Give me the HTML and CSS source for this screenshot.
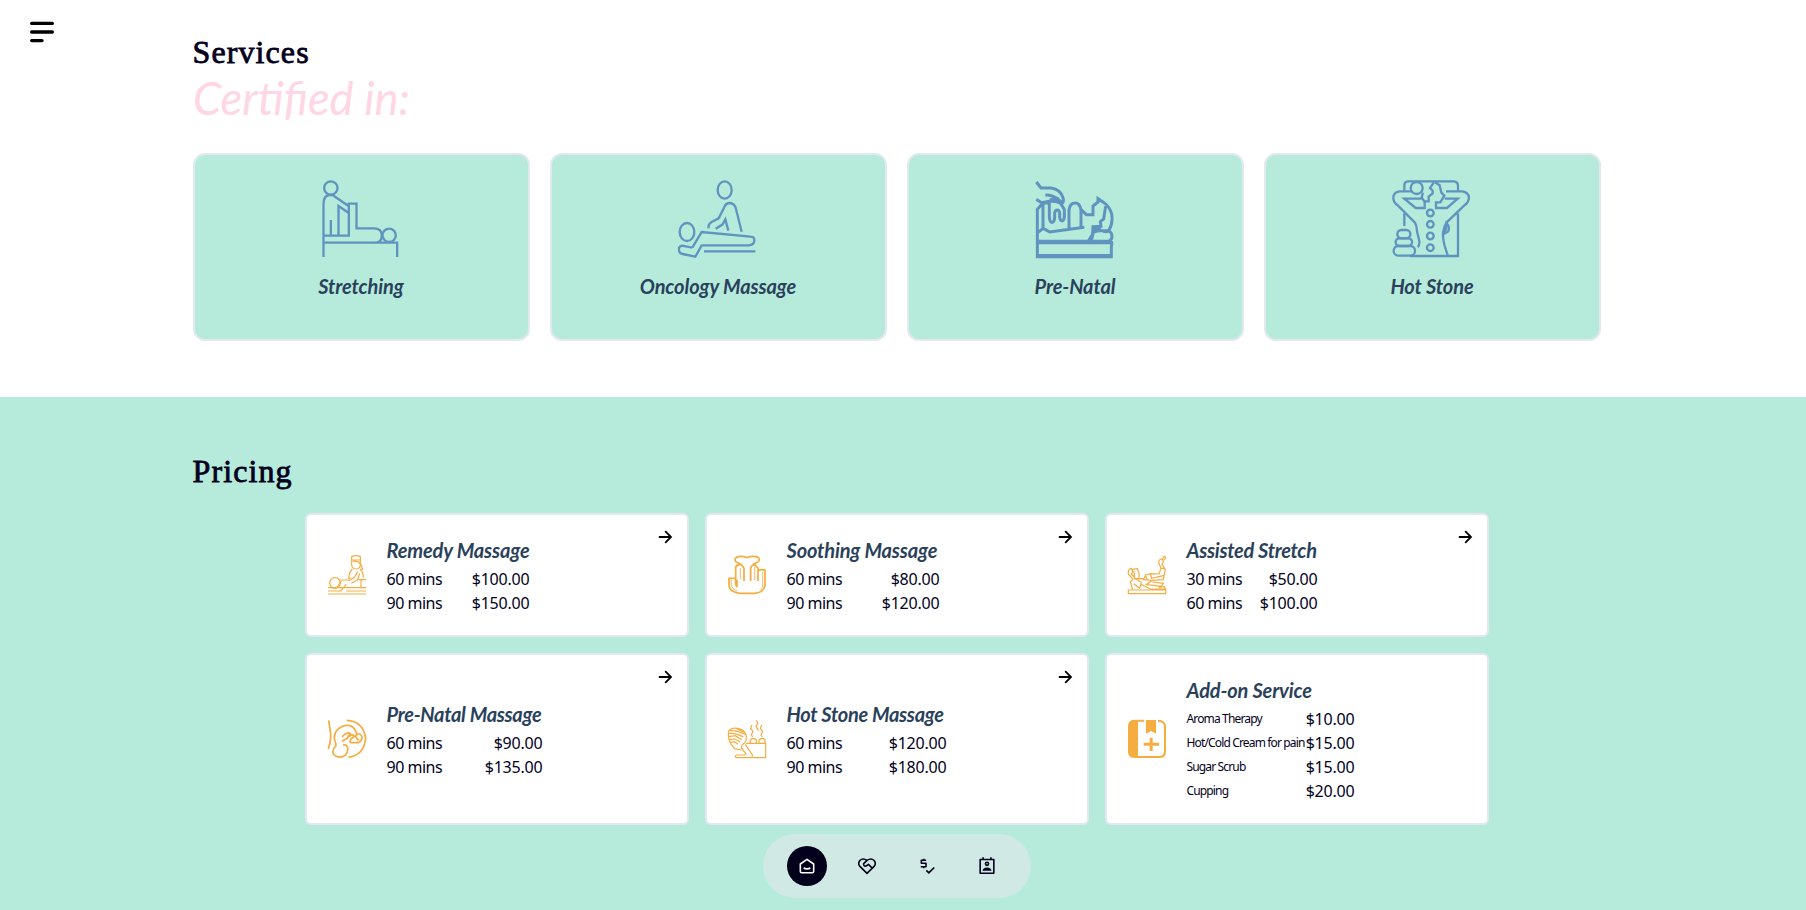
FILE: index.html
```html
<!DOCTYPE html>
<html lang="en">
<head>
<meta charset="utf-8">
<title>Massage Services</title>
<link rel="stylesheet" href="styles.css">
</head>
<body>
<button class="menu" aria-label="Menu">
  <svg viewBox="0 0 24 22"><path d="M1.7 2.4H22.3M1.7 11H22.3M1.7 19.6H12"/></svg>
</button>

<section class="services">
  <h2 class="heading">Services</h2>
  <p class="subheading"><span>Certified in:</span></p>
  <div class="service-grid">
    <article class="service">
      <svg class="service-icon" viewBox="35.5 30 240 240">
        <ellipse cx="65" cy="54" rx="20" ry="20"/>
        <path d="M43 261V103Q43 78 59 75H70L119 109M43 197H119V101H142V175H196Q218 176 218 197T196 218M43 218H264V261M65 150V197M88 197V108L119 129"/>
        <circle cx="240" cy="196" r="20"/>
      </svg>
      <h3 class="service-name">Stretching</h3>
    </article>
    <article class="service">
      <svg class="service-icon" viewBox="27 30 240 240">
        <ellipse cx="167" cy="60" rx="21" ry="26"/>
        <ellipse cx="54" cy="186" rx="22" ry="27"/>
        <path d="M119 175Q116 162 129 155L149 145L165 113Q170 99 183 99Q197 100 201 117L218 185M140 176L161 163L169 148L178 182M70 233L39 227Q28 229 30 240Q30 250 41 252L79 260L98 226H239Q256 224 256 212Q257 200 244 200L98 186L70 233M105 244H259"/>
      </svg>
      <h3 class="service-name">Oncology Massage</h3>
    </article>
    <article class="service">
      <svg class="service-icon heavy" viewBox="33 30 240 240">
        <path d="M37 36L51 54H82Q109 58 117 83Q121 97 113 102M64 75Q82 74 103 87M37 88L52 98L76 94M40 260V118L57 99H76V140Q77 157 84 157T92 142V130Q93 120 100 120T107 132V142Q109 153 114 153T121 142V118L107 96L76 92M57 99V174M41 188L58 175L77 186L181 172M135 175V120Q138 99 153 99T171 120V174M170 117L187 134H207V108L222 96V86L240 98Q258 112 263 132Q267 161 256 178Q249 188 238 184M245 109L239 147L229 155L231 169L207 170L206 193L193 213M210 182H252Q264 187 264 199T252 214M40 214H260Q266 217 262 228V260H40V216M40 218H262"/>
        <path class="solid" d="M77 85L101 81L116 93L112 105L94 98L78 97ZM205 170L228 170L235 184L212 190L206 214H190Q202 203 205 170ZM40 252H262V263H40Z"/>
      </svg>
      <h3 class="service-name">Pre-Natal</h3>
    </article>
    <article class="service">
      <svg class="service-icon" viewBox="33 30 240 240">
        <path d="M70 65V47Q70 35 81 34H220Q231 36 231 48V65M93 64H56Q38 66 37 83Q37 97 49 105L102 158Q108 169 108 184L115 213Q116 226 110 231M195 64H244Q262 67 264 82Q263 98 250 106L197 157Q185 177 186 198Q187 213 191 228L201 258M125 86H70L104 114H131V93M191 86H230L198 114H165V97H178L190 77L181 68L176 46L162 37M126 68L122 82L130 94H143V80L155 70V62L147 54L158 38M70 130V168M231 130V258H87"/>
        <circle cx="107" cy="54" r="18"/>
        <circle cx="148" cy="129" r="10"/><circle cx="148" cy="163" r="10"/><circle cx="148" cy="198" r="10"/><circle cx="148" cy="233" r="10"/>
        <rect x="49" y="180" width="39" height="25" rx="12"/>
        <rect x="44" y="205" width="49" height="23" rx="11"/>
        <rect x="38" y="228" width="64" height="29" rx="14"/>
        <path d="M197 160Q208 172 201 185L190 191Q196 177 197 160Z"/>
      </svg>
      <h3 class="service-name">Hot Stone</h3>
    </article>
  </div>
</section>

<section class="pricing">
  <h2 class="heading">Pricing</h2>
  <div class="price-grid">
    <article class="price-card">
      <svg class="price-icon" viewBox="81 165 120 120">
        <path d="M84 263H199M84 282H199M84 273H122L139 253M84 263H110L124 243M121 240H145M176 239H199M183 240V263M155 170Q168 164 181 170V195Q180 206 168 207Q156 206 155 195ZM155 180H181M159 184Q172 181 182 192M181 190L188 207L183 210M157 207Q147 216 146 236L152 233M180 207Q190 216 190 232M173 215L164 231L146 243M179 220L173 239L154 250M199 273H138"/>
        <circle cx="105" cy="249" r="16"/>
      </svg>
      <div class="info w-remedy">
        <h3 class="title">Remedy Massage</h3>
        <p class="row"><span class="time">60 mins</span><span>$100.00</span></p>
        <p class="row"><span class="time">90 mins</span><span>$150.00</span></p>
      </div>
      <svg class="arrow" viewBox="0 0 20 20"><path d="M3.8 10H16M10.2 4.2L16 10L10.2 15.8"/></svg>
    </article>
    <article class="price-card">
      <svg class="price-icon bold" viewBox="81 165 120 120">
        <path d="M123 193L107 185Q101 174 115 170Q129 168 141 173Q153 167 169 170Q183 175 175 185L159 193M111 261L107 253V202Q113 190 125 195L132 205V243M111 261V239M152 243V205Q155 194 165 194L174 205V243M175 211Q188 207 195 211V256Q190 279 163 280H119Q88 275 87 256V235H107"/>
        <path class="thin" d="M121 204V238M164 200V240M188 215V252Q189 264 182 270M94 240V252Q95 267 112 273"/>
      </svg>
      <div class="info w-soothing">
        <h3 class="title">Soothing Massage</h3>
        <p class="row"><span class="time">60 mins</span><span>$80.00</span></p>
        <p class="row"><span class="time">90 mins</span><span>$120.00</span></p>
      </div>
      <svg class="arrow" viewBox="0 0 20 20"><path d="M3.8 10H16M10.2 4.2L16 10L10.2 15.8"/></svg>
    </article>
    <article class="price-card">
      <svg class="price-icon" viewBox="81 165 120 120">
        <path d="M85 270H197V281H85ZM98 270L91 245L99 238L85 222Q83 210 93 205L99 214L94 222L108 238M97 208L112 206L117 219V235L104 236L102 214M108 238L124 247L119 265L101 251M121 252L151 267H196L194 260L176 262M118 236H132L137 225L151 221L177 222L183 205L176 187Q176 177 187 177L190 185L186 194L196 209L190 239L157 241L128 239M151 221L155 235L193 226M157 241L139 254L184 259L190 250L157 246M188 178L192 169L197 172L193 181M137 228L142 238M183 205L192 205"/>
      </svg>
      <div class="info w-stretch">
        <h3 class="title">Assisted Stretch</h3>
        <p class="row"><span class="time">30 mins</span><span>$50.00</span></p>
        <p class="row"><span class="time">60 mins</span><span>$100.00</span></p>
      </div>
      <svg class="arrow" viewBox="0 0 20 20"><path d="M3.8 10H16M10.2 4.2L16 10L10.2 15.8"/></svg>
    </article>
    <article class="price-card">
      <svg class="price-icon bold" viewBox="81 657 120 120">
        <path d="M86 661L92 701Q93 726 85 747M140 661Q189 663 197 714Q193 765 145 772M107 729Q98 710 109 693Q127 673 149 677Q164 681 171 702M107 729L108 737Q94 751 101 764Q118 778 137 765Q149 746 139 736L129 734M126 711Q142 694 151 701Q142 710 143 714L126 724M143 711L158 704L164 708L152 718Q147 728 154 728H175Q187 722 186 711Q183 699 171 703L166 708L173 719H178"/>
      </svg>
      <div class="info w-prenatal">
        <h3 class="title">Pre-Natal Massage</h3>
        <p class="row"><span class="time">60 mins</span><span>$90.00</span></p>
        <p class="row"><span class="time">90 mins</span><span>$135.00</span></p>
      </div>
      <svg class="arrow" viewBox="0 0 20 20"><path d="M3.8 10H16M10.2 4.2L16 10L10.2 15.8"/></svg>
    </article>
    <article class="price-card">
      <svg class="price-icon" viewBox="81 657 120 120">
        <path d="M94 734Q82 716 86 694Q92 682 113 685Q136 688 139 709Q140 730 127 733M88 692Q110 690 138 704M86 701Q105 697 130 711M86 710L106 707L125 719M87 719L105 717L120 726M91 727L103 725L114 733M94 734L104 746L124 750M110 686L131 696M127 733L124 744L138 761L134 765H109Q103 770 109 773H155Q160 766 154 760L136 733M138 730H197V773H158M169 661L174 670L168 678L175 692M156 675L152 685L159 694L154 705L158 711M185 675L181 685L188 694L183 705L187 711M151 729V720L156 716H164L169 720V729M177 729V720L182 716H190L195 720V729"/>
      </svg>
      <div class="info w-hot">
        <h3 class="title">Hot Stone Massage</h3>
        <p class="row"><span class="time">60 mins</span><span>$120.00</span></p>
        <p class="row"><span class="time">90 mins</span><span>$180.00</span></p>
      </div>
      <svg class="arrow" viewBox="0 0 20 20"><path d="M3.8 10H16M10.2 4.2L16 10L10.2 15.8"/></svg>
    </article>
    <article class="price-card">
      <svg class="price-icon" viewBox="81 657 120 120">
        <path class="solid" fill-rule="evenodd" d="M102 659H133V665H114V768H178Q192 768 192 754V679Q192 666 174 665V659Q198 660 198 680V755Q197 774 179 774H102Q84 773 84 755V680Q84 660 102 659ZM138 660H168V701L153 693L138 701ZM149 713H158V728H177V737H158V753H149V737H131V728H149Z"/>
      </svg>
      <div class="info w-addon">
        <h3 class="title">Add-on Service</h3>
        <p class="row"><span class="extra">Aroma Therapy</span><span>$10.00</span></p>
        <p class="row"><span class="extra">Hot/Cold Cream for pain</span><span>$15.00</span></p>
        <p class="row"><span class="extra">Sugar Scrub</span><span>$15.00</span></p>
        <p class="row"><span class="extra">Cupping</span><span>$20.00</span></p>
      </div>
    </article>
  </div>
</section>

<nav class="dock">
  <a class="dock-item active"><svg viewBox="0 0 24 24"><path d="M4 9.6L12 4L20 9.6V18.5Q20 20 18.5 20H5.5Q4 20 4 18.5ZM8 14.4Q12 16.6 16 14.4"/></svg></a>
  <a class="dock-item"><svg viewBox="0 0 24 24"><path d="M12 20.8L3.2 12.2Q.8 8.7 3.4 5.4Q7.2 1.8 12 5.3Q16.8 1.8 20.6 5.4Q23.2 8.7 20.8 12.2ZM12 5.3L8 9.2Q7.7 12.7 11 12L13.7 10L18 14.2"/></svg></a>
  <a class="dock-item"><svg viewBox="0 0 24 24"><path d="M11 5H5.2V8.7H10.8V12.8H4.5M8 3.2V5M8 13V14.8M11.2 17.3L14.2 20.3L20.7 13.8"/></svg></a>
  <a class="dock-item"><svg viewBox="0 0 24 24"><path d="M3.8 4.2H20.2V20.6H3.8ZM7.3 1.6V4.2M16.7 1.6V4.2"/><circle cx="12" cy="9.3" r="1.9"/><path class="fill flat" d="M6.6 17.6Q7 14.2 12 13.8Q17 14.2 17.4 17.6Z"/></svg></a>
</nav>
</body>
</html>
```
FILE: styles.css
```css
* { box-sizing: border-box; margin: 0; padding: 0; }

body {
  height: 910px;
  overflow: hidden;
  background: #fff;
  color: #03001c;
  font-family: "Noto Sans", sans-serif;
  font-size: 16px;
}

svg { fill: none; stroke: currentColor; flex: none; display: block; }
.solid, .fill { fill: currentColor; }
.solid, .flat { stroke: none; }

.menu {
  position: fixed;
  top: 21px;
  left: 30px;
  width: 24px;
  height: 22px;
  border: 0;
  background: none;
  color: #000;
}
.menu svg { width: 24px; height: 22px; stroke-width: 3.4; stroke-linecap: round; }

.services { height: 397px; padding: 32px 205.5px 0 192.5px; }
.pricing { height: 513px; padding: 54px 205.5px 0 192.5px; background: #b6ebdb; }

.heading {
  font: 400 32px/40px "Liberation Serif", serif;
  letter-spacing: 1.1px;
  -webkit-text-stroke: .8px currentColor;
}
.subheading {
  margin-bottom: 31px;
  padding-top: 2px;
  color: #ffd6e4;
  font: italic 400 46px/48px Lato, sans-serif;
}
.subheading span { display: inline-block; transform: scaleX(.985); transform-origin: left; }

.service-grid { display: grid; grid-template-columns: repeat(4, 1fr); gap: 20px; }
.service {
  display: flex;
  flex-direction: column;
  align-items: center;
  height: 188px;
  padding-top: 25px;
  border: 2px solid #e2e8f0;
  border-radius: 12px;
  background: #b6ebdb;
}
.service-icon { width: 80px; height: 80px; color: #5f94bf; stroke-width: 7; }
.service-icon.heavy { stroke-width: 9; }
.service-name {
  margin-top: 10px;
  color: #2a415b;
  font: italic 700 20px/32px Lato, sans-serif;
  letter-spacing: -.1px;
}

.price-grid {
  display: grid;
  grid-template-columns: repeat(3, 384px);
  gap: 16px;
  margin: 22px 0 0 112px;
}
.price-card {
  position: relative;
  display: flex;
  align-items: center;
  gap: 20px;
  padding: 20px;
  border: 2px solid #e2e8f0;
  border-radius: 6px;
  background: #fff;
}
.price-icon { width: 40px; height: 40px; color: #f5ad42; stroke-width: 3.6; }
.price-icon.bold { stroke-width: 5.2; }
.thin { stroke-width: 2.5; }
.title {
  height: 32px;
  color: #2a415b;
  font: italic 700 20px/30px Lato, sans-serif;
  letter-spacing: -.15px;
  white-space: nowrap;
}
.row { display: flex; justify-content: space-between; line-height: 24px; letter-spacing: -.2px; white-space: nowrap; }
.time { letter-spacing: -.5px; }
.extra { font-size: 12px; letter-spacing: -.85px; }
.w-remedy { width: 143px; }
.w-soothing { width: 153px; }
.w-stretch { width: 131px; }
.w-prenatal { width: 156px; }
.w-prenatal .title, .w-hot .title, .w-stretch .title { letter-spacing: -.3px; }
.w-hot { width: 160px; }
.w-addon { width: 168px; }
.arrow { position: absolute; top: 12px; right: 12px; width: 20px; height: 20px; color: #000; stroke-width: 1.8; }

.dock {
  position: fixed;
  left: 763px;
  bottom: 12px;
  display: flex;
  gap: 20px;
  padding: 12px 24px;
  border-radius: 32px;
  background: #d1e9e5;
}
.dock-item { display: grid; place-items: center; width: 40px; height: 40px; border-radius: 50%; }
.dock-item svg { width: 20px; height: 20px; stroke-width: 1.9; stroke-linejoin: round; }
.active { background: #03001c; color: #fff; }
```
